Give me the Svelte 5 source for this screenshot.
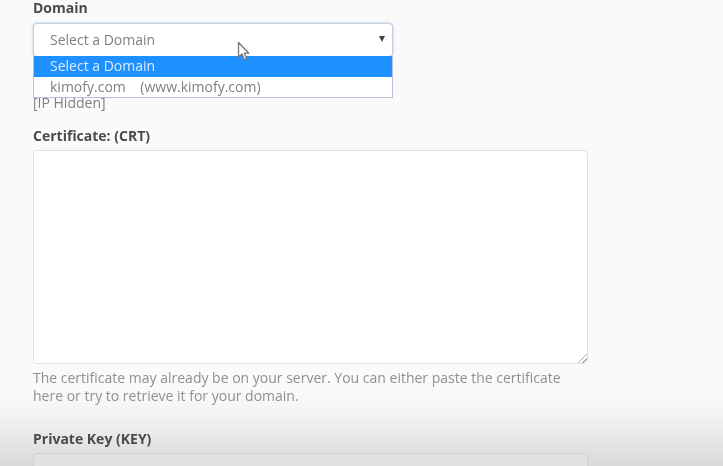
<script>
	const domains = [
		{ label: 'Select a Domain', active: true },
		{ label: 'kimofy.com\u00a0\u00a0\u00a0\u00a0(www.kimofy.com)', active: false }
	]
</script>

<div class="page">
	<section class="field domain">
		<span class="label">Domain</span>
		<div class="select-wrap">
			<div class="select">
				<span>Select a Domain</span>
				<i class="caret"></i>
			</div>
			<ul class="menu">
				{#each domains as d}
					<li class:active={d.active}>{d.label}</li>
				{/each}
			</ul>
			<svg class="cursor" width="14" height="21" viewBox="0 0 14 21">
				<path d="M1.5 1.5v14.5l3.4-3 2.4 5.6 2.4-1-2.4-5.4h4.6z" fill="#fff" stroke="#777" stroke-width="1.3" stroke-linejoin="round" />
			</svg>
		</div>
		<div class="ip">[IP Hidden]</div>
	</section>

	<section class="field cert">
		<label class="label" for="crt">Certificate: (CRT)</label>
		<textarea id="crt"></textarea>
		<p class="help">The certificate may already be on your server. You can either paste the certificate here or try to retrieve it for your domain.</p>
	</section>

	<section class="field key">
		<label class="label" for="key">Private Key (KEY)</label>
		<div id="key" class="keybox"></div>
	</section>
</div>

<style>
	:global(body) {
		margin: 0;
		background: #fafafa;
		overflow: hidden;
	}
	.page {
		position: relative;
		width: 723px;
		height: 466px;
		box-sizing: border-box;
		padding: 0 0 0 33px;
		overflow: hidden;
		font-family: 'Open Sans', sans-serif;
		font-size: 14px;
		color: #777;
		background: linear-gradient(to bottom, #fafafa 0, #fafafa 390px, #f3f3f3 415px, #e4e4e4 445px, #d9d9d9 466px);
		filter: blur(0.45px);
	}
	.field {
		display: flex;
		flex-direction: column;
		width: 555px;
	}
	.label {
		font-weight: 700;
		font-size: 14px;
		line-height: 16px;
		color: #4a4a4a;
	}
	.domain .label {
		height: 23px;
		box-sizing: border-box;
	}
	.select-wrap {
		position: relative;
		width: 360px;
	}
	.select {
		box-sizing: border-box;
		height: 34px;
		display: flex;
		align-items: center;
		justify-content: space-between;
		padding: 0 7px 2px 16px;
		background: #fff;
		border: 1px solid #c3cfdc;
		border-radius: 4px;
		box-shadow: 0 0 3px rgba(90, 140, 200, .45);
		color: #808080;
	}
	.caret {
		width: 0;
		height: 0;
		border-left: 3px solid transparent;
		border-right: 3px solid transparent;
		border-top: 6px solid #444;
	}
	.menu {
		position: absolute;
		z-index: 2;
		left: 0;
		right: 0;
		top: 33px;
		margin: 0;
		padding: 0;
		list-style: none;
		background: #fff;
		border: 1px solid #b5c3d6;
		border-top: 0;
	}
	.menu li {
		height: 20px;
		line-height: 19px;
		padding-left: 16px;
		color: #808080;
	}
	.menu li.active {
		height: 21px;
		line-height: 20px;
		background: #1e90ff;
		color: #d8ebff;
	}
	.cursor {
		position: absolute;
		z-index: 3;
		left: 204px;
		top: 18px;
	}
	.ip {
		margin-top: 38px;
		line-height: 16px;
		color: #808080;
	}
	.cert {
		margin-top: 17px;
	}
	.cert .label {
		height: 23px;
	}
	textarea {
		display: block;
		box-sizing: border-box;
		width: 555px;
		height: 214px;
		margin: -1px 0 0;
		padding: 6px;
		background: #fff;
		border: 1px solid #e0e0e0;
		border-radius: 4px;
		outline: none;
	}
	textarea::-webkit-resizer {
		background: linear-gradient(135deg, transparent 45%, #aaa 45%, #aaa 55%, transparent 55%, transparent 72%, #aaa 72%, #aaa 82%, transparent 82%) no-repeat right bottom / 9px 9px;
	}
	.help {
		margin: 5px 0 0;
		width: 540px;
		font-size: 14px;
		line-height: 18px;
		color: #909090;
	}
	.key {
		margin-top: 26px;
	}
	.key .label {
		height: 22px;
	}
	.keybox {
		box-sizing: border-box;
		height: 40px;
		background: #e2e2e2;
		border: 1px solid #cfcfcf;
		border-radius: 4px;
	}
</style>
